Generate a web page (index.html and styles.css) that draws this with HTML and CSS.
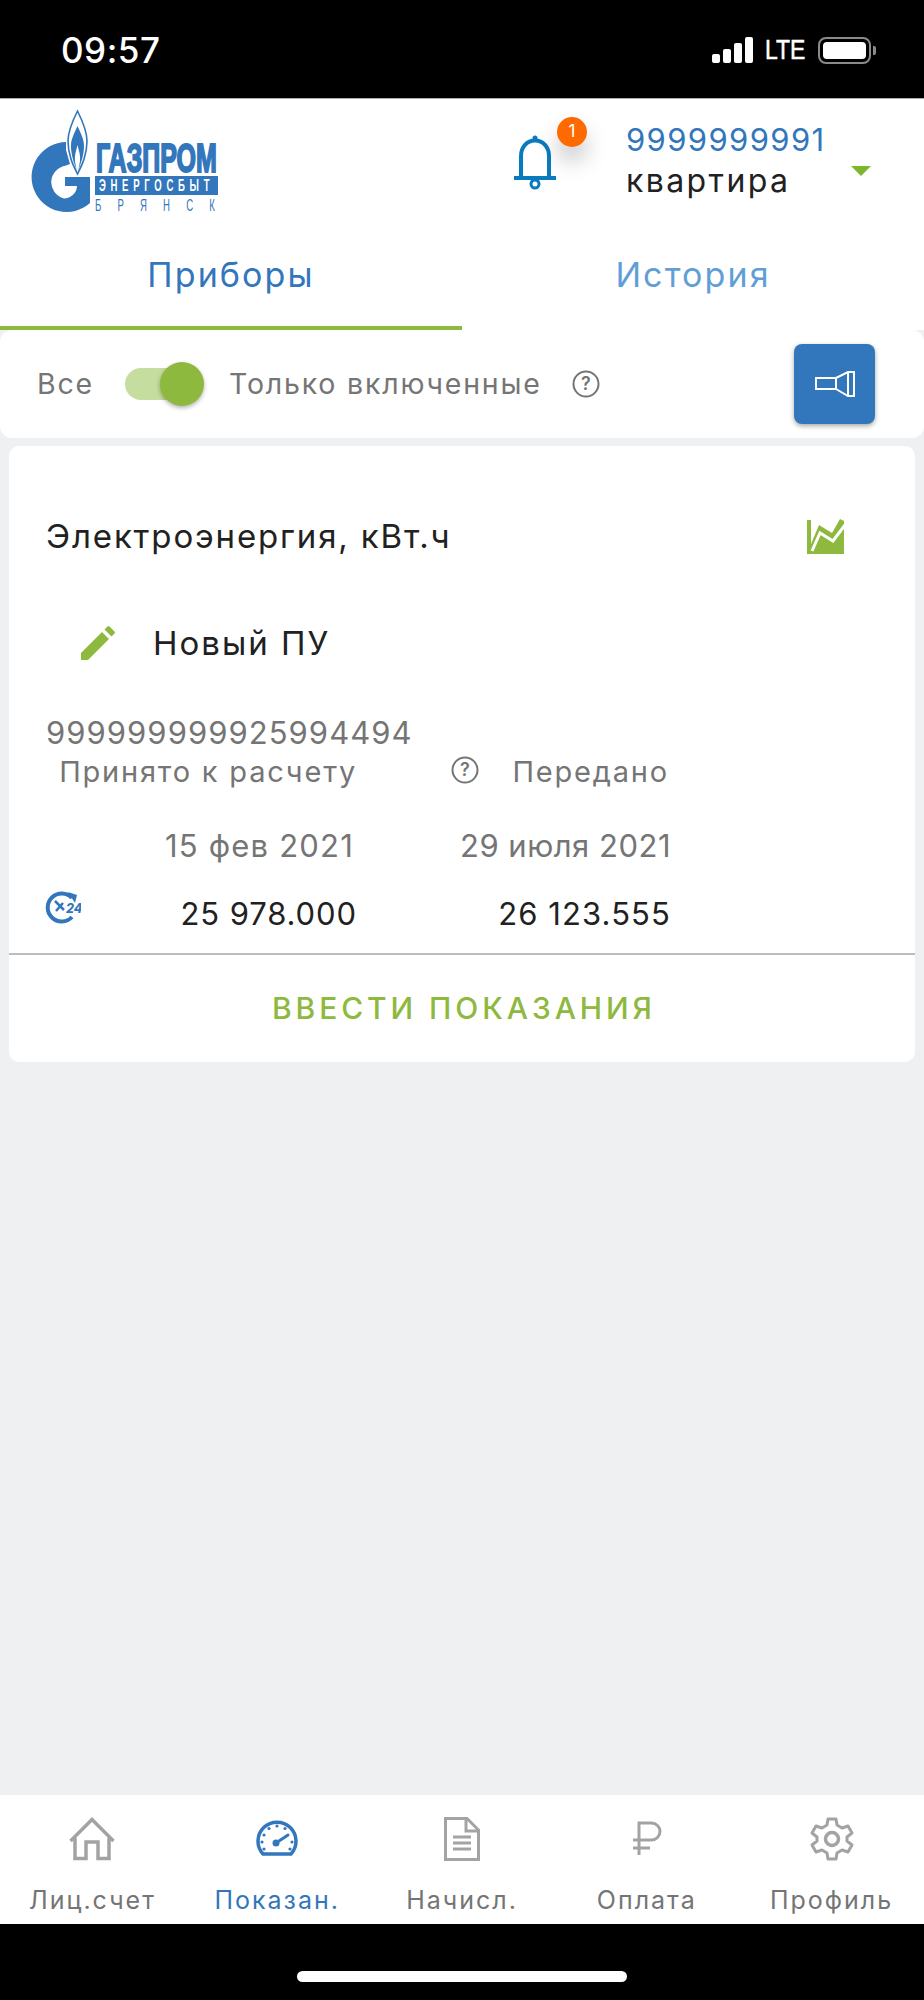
FILE: index.html
```html
<!DOCTYPE html>
<html lang="ru">

<head>
    <meta charset="UTF-8">
    <meta name="viewport" content="width=device-width, initial-scale=1.0">
    <title>Приборы</title>
    <link rel="stylesheet" href="styles.css">
</head>

<body>
    <div class="status-bar">
        <span class="time">09:57</span>
        <div class="status-icons">
            <div class="signal"><i></i><i></i><i></i><i></i></div>
            <span class="lte">LTE</span>
            <div class="battery"><div class="battery-fill"></div></div>
            <div class="battery-nub"></div>
        </div>
    </div>

    <header class="header">
        <svg class="logo" viewBox="28 108 212 106" width="212" height="106">
            <path fill="#3276bc" d="M66 142A35 35 0 1 0 90 203V177H65V186H77A13 13 0 0 1 64 198.500A18 17 0 0 1 66 165.500L70 164L66 150Z"/>
            <path fill="#fff" stroke="#3276bc" stroke-width="1.600" d="M77.500 111C72 122 68 131 68 141C68 155 73 165 77.500 174C82 165 87 155 87 141C87 131 83 122 77.500 111Z"/>
            <path fill="#3276bc" d="M77.500 126C74 134 71 139 71 146C71 155 74 163 77 171C75 163 74 158 76 151C76.500 149 77 147 77.500 145C78 147 78.500 149 79 151C81 158 80 163 78 171C81 163 84 155 84 146C84 139 81 134 77.500 126Z"/>
            <text class="logo-main" transform="translate(96 171.500) scale(0.61 1)">ГАЗПРОМ</text>
            <rect x="95" y="176" width="123" height="19" fill="#3276bc"/>
            <text class="logo-sub" transform="translate(99 191) scale(0.6 1)">ЭНЕРГОСБЫТ</text>
            <text class="logo-city" transform="translate(95 211) scale(0.6 1)">БРЯНСК</text>
        </svg>

        <div class="bell">
            <svg viewBox="0 0 42 56" width="42" height="56" fill="none" stroke="#0a7abf" stroke-width="4">
                <path d="M7 43V22C7 13 13 6.500 21 6.500C29 6.500 35 13 35 22V43"/>
                <path d="M0 44H42"/>
                <circle cx="21" cy="50" r="4" stroke-width="3"/>
                <circle cx="21" cy="4" r="2.500" fill="#0a7abf" stroke="none"/>
            </svg>
            <span class="badge">1</span>
        </div>

        <div class="account">
            <div class="account-number">9999999991</div>
            <div class="account-type">квартира</div>
        </div>
        <div class="arrow"></div>
    </header>

    <nav class="tabs">
        <div class="tab active">Приборы</div>
        <div class="tab">История</div>
    </nav>

    <div class="filter">
        <span>Все</span>
        <div class="toggle"><div class="toggle-thumb"></div></div>
        <span>Только включенные</span>
        <svg class="help filter-help" viewBox="0 0 28 28" width="28" height="28">
            <circle cx="14" cy="14" r="12.500" fill="none" stroke="#757575" stroke-width="2"/>
            <text x="14" y="20" text-anchor="middle">?</text>
        </svg>
        <button class="light-btn">
            <svg viewBox="0 0 40 26" width="40" height="26" fill="none" stroke="#fff" stroke-width="2">
                <path d="M1 7H21V18H1Z"/>
                <path d="M21 7L33 1H39V25H33L21 18"/>
                <path d="M33 1V25"/>
            </svg>
        </button>
    </div>

    <div class="card">
        <div class="card-title">
            <span>Электроэнергия, кВт.ч</span>
            <svg viewBox="0 0 38 35" width="38" height="35">
                <path fill="#8eb93f" d="M0 1H4V25L12 6L25 14L33 0L37 2V35H0Z"/>
                <path fill="none" stroke="#fff" stroke-width="3" d="M5 32L13 14L26 22L38 6"/>
            </svg>
        </div>

        <div class="device-name">
            <svg viewBox="0 0 34 34" width="34" height="34" fill="#8eb93f">
                <path d="M0 27L21 6L28 13L7 34H0Z"/>
                <path d="M23.500 3.500L26.500 0.500C27 0 28 0 28.500 0.500L33.500 5.500C34 6 34 7 33.500 7.500L30.500 10.500Z"/>
            </svg>
            <span>Новый ПУ</span>
        </div>

        <div class="serial">999999999925994494</div>

        <div class="readings">
            <div class="col-label">Принято к расчету</div>
            <div class="col-label col-second">
                <svg class="help" viewBox="0 0 28 28" width="28" height="28">
                    <circle cx="14" cy="14" r="12.500" fill="none" stroke="#757575" stroke-width="2"/>
                    <text x="14" y="20" text-anchor="middle">?</text>
                </svg>
                <span>Передано</span>
            </div>
            <div class="col-date col-date-first">15 фев 2021</div>
            <div class="col-date">29 июля 2021</div>
            <div class="col-value col-first">
                <svg viewBox="0 0 36 34" width="36" height="34">
                    <path fill="none" stroke="#3276bc" stroke-width="4" d="M27 7A14 14 0 1 0 27 26"/>
                    <path fill="#3276bc" d="M23 1L32 4L30 12Z"/>
                    <path fill="none" stroke="#3276bc" stroke-width="2.500" d="M10 10L19 19M11 20L18 12"/>
                    <text class="clock-num" x="21" y="22">24</text>
                </svg>
                <span>25 978.000</span>
            </div>
            <div class="col-value col-value-second">26 123.555</div>
        </div>

        <div class="card-action">ВВЕСТИ ПОКАЗАНИЯ</div>
    </div>

    <div class="spacer"></div>

    <nav class="bottom-nav">
        <div class="nav-item">
            <svg viewBox="0 0 46 44" width="46" height="44" fill="none" stroke="#a3a3a3" stroke-width="3.500">
                <path d="M1.500 24L23 2.500L44.500 24"/>
                <path d="M6 21V41.500H17V25H29V41.500H40V21"/>
            </svg>
            <span>Лиц.счет</span>
        </div>
        <div class="nav-item active">
            <svg viewBox="0 0 42 44" width="42" height="44" fill="none">
                <path stroke="#3276bc" stroke-width="3.500" d="M7 37A19 19 0 1 1 35 37Z" stroke-linejoin="round"/>
                <g fill="#3276bc">
                    <circle cx="21" cy="9" r="1.600"/><circle cx="13" cy="11.500" r="1.600"/><circle cx="29" cy="11.500" r="1.600"/>
                    <circle cx="8" cy="18" r="1.600"/><circle cx="6" cy="25" r="1.600"/><circle cx="36" cy="25" r="1.600"/>
                    <circle cx="8" cy="32" r="1.600"/><circle cx="34" cy="32" r="1.600"/>
                    <circle cx="20" cy="26" r="3.500"/>
                </g>
                <path stroke="#3276bc" stroke-width="3" stroke-linecap="round" d="M20 26L32 18"/>
            </svg>
            <span>Показан.</span>
        </div>
        <div class="nav-item">
            <svg viewBox="0 0 36 44" width="36" height="44" fill="none" stroke="#a3a3a3" stroke-width="3">
                <path d="M1.500 1.500H23L34.500 13V42.500H1.500Z"/>
                <path d="M22 1.500V14H34.500"/>
                <path d="M9 20H27M9 26H27M9 32H27"/>
            </svg>
            <span>Начисл.</span>
        </div>
        <div class="nav-item">
            <svg viewBox="0 0 36 44" width="36" height="44" fill="none" stroke="#a3a3a3" stroke-width="3">
                <path d="M10 38V6H22.500A8.500 8.500 0 0 1 22.500 23H4"/>
                <path d="M4 31H21"/>
            </svg>
            <span>Оплата</span>
        </div>
        <div class="nav-item">
            <svg viewBox="0 0 44 44" width="44" height="44" fill="none" stroke="#a3a3a3" stroke-width="3" stroke-linejoin="round">
                <path d="M18 2H26L27 8L32 11L38 9L42 16L37 20V24L42 28L38 35L32 33L27 36L26 42H18L17 36L12 33L6 35L2 28L7 24V20L2 16L6 9L12 11L17 8Z"/>
                <circle cx="22" cy="22" r="6.500" stroke-width="3.500"/>
            </svg>
            <span>Профиль</span>
        </div>
    </nav>

    <div class="home-bar">
        <div class="home-indicator"></div>
    </div>
</body>

</html>
```

FILE: styles.css
```css
* {
    box-sizing: border-box;
}

body {
    margin: 0;
    width: 924px;
    height: 2000px;
    display: flex;
    flex-direction: column;
    background-color: #eff0f2;
    font-family: Inter, "Noto Sans", sans-serif;
    color: #212121;
    letter-spacing: 2px;
}

/* status bar */
.status-bar {
    height: 99px;
    flex: none;
    background-color: #000;
    border-bottom: 1px solid #aaa;
    display: flex;
    justify-content: space-between;
    align-items: center;
    padding: 2px 48px 0 61px;
    color: #fff;
}

.time {
    font-size: 35px;
    font-weight: 500;
    letter-spacing: 0.5px;
}

.status-icons {
    display: flex;
    align-items: center;
}

.signal {
    display: flex;
    align-items: flex-end;
    gap: 3px;
    height: 26px;
    margin-right: 12px;
}

.signal i {
    width: 8px;
    background-color: #fff;
    border-radius: 2px;
}

.signal i:nth-child(1) { height: 9px; }
.signal i:nth-child(2) { height: 14px; }
.signal i:nth-child(3) { height: 20px; }
.signal i:nth-child(4) { height: 26px; }

.lte {
    font-family: "Liberation Sans", sans-serif;
    font-size: 27px;
    letter-spacing: 0;
    margin-right: 13px;
    transform: scaleX(0.85);
    transform-origin: left;
    width: 40px;
    -webkit-text-stroke: 0.5px #fff;
}

.battery {
    width: 53px;
    height: 27px;
    border: 2px solid #8a8a8a;
    border-radius: 8px;
    padding: 3px;
}

.battery-fill {
    height: 100%;
    background-color: #fff;
    border-radius: 4px;
}

.battery-nub {
    width: 3px;
    height: 9px;
    margin-left: 2px;
    background-color: #8a8a8a;
    border-radius: 0 2px 2px 0;
}

/* header */
.header {
    height: 119px;
    flex: none;
    background-color: #fff;
    display: flex;
    align-items: flex-start;
    padding-left: 28px;
}

.logo {
    margin-top: 9px;
}

.logo-main {
    font-family: "Liberation Sans", sans-serif;
    font-weight: 700;
    font-size: 41px;
    letter-spacing: 0;
    fill: #3276bc;
    stroke: #3276bc;
    stroke-width: 2px;
}

.logo-sub {
    font-family: "Liberation Sans", sans-serif;
    font-weight: 700;
    font-size: 16px;
    letter-spacing: 7.800px;
    fill: #fff;
}

.logo-city {
    font-family: "Liberation Sans", sans-serif;
    font-size: 16px;
    letter-spacing: 27px;
    fill: #3276bc;
}

.bell {
    position: relative;
    margin: 35px 0 0 274px;
    width: 42px;
    height: 56px;
}

.badge {
    position: absolute;
    left: 43px;
    top: -17px;
    width: 30px;
    height: 30px;
    border-radius: 50%;
    background-color: #ff6a00;
    color: #fff;
    font-size: 17px;
    letter-spacing: 0;
    line-height: 28px;
    text-align: center;
    box-shadow: 0 14px 22px rgba(0, 0, 0, 0.22);
}

.account {
    margin: 21px 0 0 70px;
    width: 225px;
    font-size: 31px;
}

.account-number {
    line-height: 40px;
    color: #3276bc;
    letter-spacing: 1.400px;
}

.account-type {
    font-size: 32px;
    line-height: 42px;
    letter-spacing: 2.400px;
}

.arrow {
    margin-top: 67px;
    width: 0;
    height: 0;
    border-left: 10px solid transparent;
    border-right: 10px solid transparent;
    border-top: 10px solid #7cb62a;
}

/* tabs */
.tabs {
    height: 112px;
    flex: none;
    background-color: #fff;
    display: flex;
}

.tab {
    width: 462px;
    padding-top: 36px;
    text-align: center;
    font-size: 34px;
    letter-spacing: 2.100px;
    color: #5f9fd6;
}

.tab.active {
    color: #3276bc;
    border-bottom: 4px solid #8eb93f;
}

/* filter row */
.filter {
    height: 108px;
    flex: none;
    background-color: #fff;
    border-radius: 12px;
    display: flex;
    align-items: center;
    padding-left: 37px;
    font-size: 28.500px;
    letter-spacing: 1.800px;
    color: #757575;
}

.filter span {
    margin-top: -2px;
}

.toggle {
    position: relative;
    width: 64px;
    height: 32px;
    margin: 0 40px 0 31px;
    border-radius: 16px;
    background-color: #c5dd9e;
}

.toggle-thumb {
    position: absolute;
    right: -15px;
    top: -6px;
    width: 44px;
    height: 44px;
    border-radius: 50%;
    background-color: #8eb93f;
    box-shadow: 0 2px 4px rgba(0, 0, 0, 0.3);
}

.help {
    flex: none;
}

.help text {
    font-size: 18px;
    font-weight: 600;
    letter-spacing: 0;
    fill: #757575;
}

.filter-help {
    margin-left: 30px;
}

.light-btn {
    width: 81px;
    height: 80px;
    margin-left: auto;
    margin-right: 49px;
    padding: 0;
    border: none;
    border-radius: 8px;
    background-color: #3276bc;
    box-shadow: 0 2px 5px rgba(0, 0, 0, 0.35);
    display: flex;
    justify-content: center;
    align-items: center;
}

/* card */
.card {
    flex: none;
    height: 616px;
    margin: 8px 9px 0;
    background-color: #fff;
    border-radius: 10px;
}

.card-title {
    display: flex;
    justify-content: space-between;
    align-items: center;
    padding: 73px 70px 0 37px;
    height: 107px;
    font-size: 33px;
    letter-spacing: 1.850px;
}

.device-name {
    display: flex;
    align-items: center;
    gap: 38px;
    padding: 73px 0 0 72px;
    height: 107px;
    font-size: 33px;
    letter-spacing: 2px;
}

.serial {
    padding: 55px 0 0 37px;
    height: 95px;
    font-size: 31px;
    line-height: 36px;
    letter-spacing: 1.050px;
    color: #757575;
}

.readings {
    display: grid;
    grid-template-columns: 311px 314px;
    padding-left: 37px;
}

.col-label {
    height: 41px;
    padding-top: 1px;
    font-size: 29px;
    line-height: 31px;
    letter-spacing: 1.800px;
    color: #757575;
    text-align: right;
}

.col-second {
    display: flex;
    justify-content: space-between;
    align-items: flex-start;
    padding: 1px 2px 0 94px;
}

.col-date {
    height: 69px;
    padding-top: 32px;
    font-size: 31px;
    line-height: 36px;
    letter-spacing: 0.500px;
    color: #757575;
    text-align: right;
}

.col-date-first {
    padding-right: 3px;
    letter-spacing: 1.200px;
}

.col-value {
    height: 88px;
    padding-top: 31px;
    font-size: 31px;
    line-height: 36px;
    letter-spacing: 0.900px;
    text-align: right;
}

.col-value-second {
    letter-spacing: 1.100px;
}

.col-first {
    display: flex;
    justify-content: space-between;
    align-items: flex-start;
    padding-top: 0;
}

.col-first span {
    margin-top: 31px;
}

.col-first svg {
    margin: 26px 0 0 -1px;
}

.clock-num {
    font-size: 12.500px;
    font-weight: 800;
    font-style: italic;
    letter-spacing: 0;
    fill: #3276bc;
}

.card-action {
    border-top: 2px solid #bdbdbd;
    height: 91px;
    text-align: center;
    padding: 35px 0 0 4px;
    font-size: 30px;
    font-weight: 500;
    letter-spacing: 3.900px;
    color: #8eb93f;
}

.spacer {
    flex: 1;
}

/* bottom navigation */
.bottom-nav {
    height: 129px;
    flex: none;
    background-color: #fff;
    display: grid;
    grid-template-columns: repeat(5, 1fr);
}

.nav-item {
    display: flex;
    flex-direction: column;
    align-items: center;
    padding-top: 22px;
    font-size: 25px;
    letter-spacing: 2px;
    color: #757575;
}

.nav-item span {
    margin-top: 23px;
    line-height: 32px;
}

.nav-item.active {
    color: #3276bc;
}

.home-bar {
    height: 76px;
    flex: none;
    background-color: #000;
    padding-top: 47px;
}

.home-indicator {
    width: 330px;
    height: 11px;
    margin: 0 auto;
    background-color: #fff;
    border-radius: 6px;
}
```
